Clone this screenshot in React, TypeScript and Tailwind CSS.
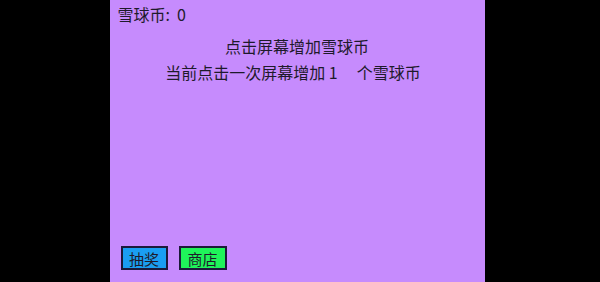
export default function App() {
  return (
    <div className="w-[600px] h-[282px] bg-black flex justify-center" style={{ fontFamily: '"Noto Sans CJK SC", "Noto Sans", sans-serif' }}>
      <div className="w-[375px] h-full bg-[#c68bfd] ml-[-6px] flex flex-col text-[#1e1a2b]">
        <div className="pl-[8px] pt-[2px] text-[16px] leading-[24px] whitespace-pre">雪球币:  0</div>
        <div className="mt-[7px] text-center text-[16px] leading-[26px]">
          <div>点击屏幕增加雪球币</div>
          <div className="pr-[8px]">
            <span>当前点击一次屏幕增加 1</span>
            <span className="ml-[19px]">个雪球币</span>
          </div>
        </div>
        <div className="mt-auto mb-[12px] pl-[11px] flex gap-[11px]">
          <button className="w-[47px] h-[24px] bg-[#1a9ef2] border-2 border-[#1c1a3a] text-[15px] leading-none text-[#1e1a2b]">抽奖</button>
          <button className="w-[48px] h-[24px] bg-[#1ff35a] border-2 border-[#1c1a3a] text-[15px] leading-none text-[#1e1a2b]">商店</button>
        </div>
      </div>
    </div>
  );
}
